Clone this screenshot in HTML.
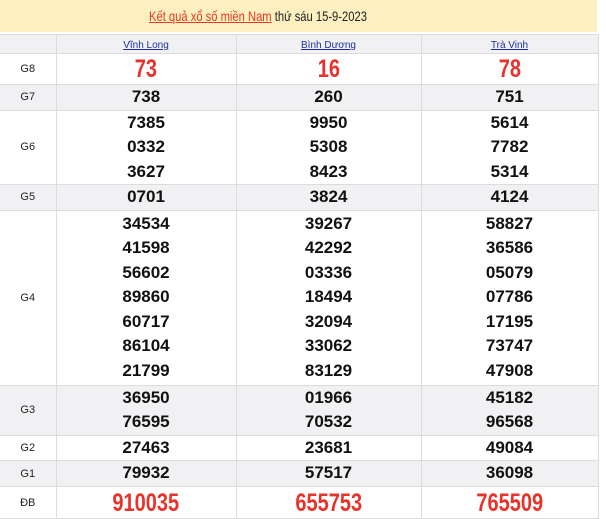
<!DOCTYPE html>
<html><head><meta charset="utf-8"><style>
*{margin:0;padding:0;box-sizing:border-box}
body{width:606px;height:516px;overflow:hidden;background:#fff;font-family:"Liberation Sans",Arial,sans-serif;position:relative}
.hd{position:absolute;left:0;top:0;width:597px;height:32px;background:#fcefc0;font-size:14px;line-height:33px;color:#222}
.hd span{position:absolute;left:149px;top:0;white-space:nowrap;transform:scaleX(.8);transform-origin:0 0}
.hd a{color:#e8391f;text-decoration:underline}
table{position:absolute;left:0;top:34px;width:598px;border-collapse:collapse;table-layout:fixed}
td{border:1px solid #dcdcdc;text-align:center;vertical-align:middle;padding:0;overflow:hidden}
td.l{font-size:11px;color:#222;width:56px;border-left:none}
tr.g td{background:#f1f1f3}
.n{font-weight:bold;font-size:17px;color:#111;line-height:24.5px}
.r{font-weight:bold;color:#e8332b;font-size:25px;line-height:26px}
.r span{display:inline-block;transform:scaleX(.8)}
.c a{color:#1a2fa0;font-size:10px;text-decoration:underline}
</style></head><body>
<div class="hd"><span><a>Kết quả xổ số miền Nam</a> thứ sáu 15-9-2023</span></div>
<table>
<colgroup><col style="width:56px"><col style="width:180px"><col style="width:185px"><col style="width:177px"></colgroup>
<tr class="g c" style="height:18px"><td class="l"></td><td><a>Vĩnh Long</a></td><td><a>Bình Dương</a></td><td><a>Trà Vinh</a></td></tr>
<tr style="height:31px"><td class="l">G8</td><td class="r"><span>73</span></td><td class="r"><span>16</span></td><td class="r"><span>78</span></td></tr>
<tr class="g" style="height:25px"><td class="l">G7</td><td class="n">738</td><td class="n">260</td><td class="n">751</td></tr>
<tr style="height:74px"><td class="l">G6</td><td class="n">7385<br>0332<br>3627</td><td class="n">9950<br>5308<br>8423</td><td class="n">5614<br>7782<br>5314</td></tr>
<tr class="g" style="height:25px"><td class="l">G5</td><td class="n">0701</td><td class="n">3824</td><td class="n">4124</td></tr>
<tr style="height:175px"><td class="l">G4</td><td class="n">34534<br>41598<br>56602<br>89860<br>60717<br>86104<br>21799</td><td class="n">39267<br>42292<br>03336<br>18494<br>32094<br>33062<br>83129</td><td class="n">58827<br>36586<br>05079<br>07786<br>17195<br>73747<br>47908</td></tr>
<tr class="g" style="height:50px"><td class="l">G3</td><td class="n">36950<br>76595</td><td class="n">01966<br>70532</td><td class="n">45182<br>96568</td></tr>
<tr style="height:25px"><td class="l">G2</td><td class="n">27463</td><td class="n">23681</td><td class="n">49084</td></tr>
<tr class="g" style="height:26px"><td class="l">G1</td><td class="n">79932</td><td class="n">57517</td><td class="n">36098</td></tr>
<tr style="height:32px"><td class="l">ĐB</td><td class="r"><span>910035</span></td><td class="r"><span>655753</span></td><td class="r"><span>765509</span></td></tr>
</table>
</body></html>
